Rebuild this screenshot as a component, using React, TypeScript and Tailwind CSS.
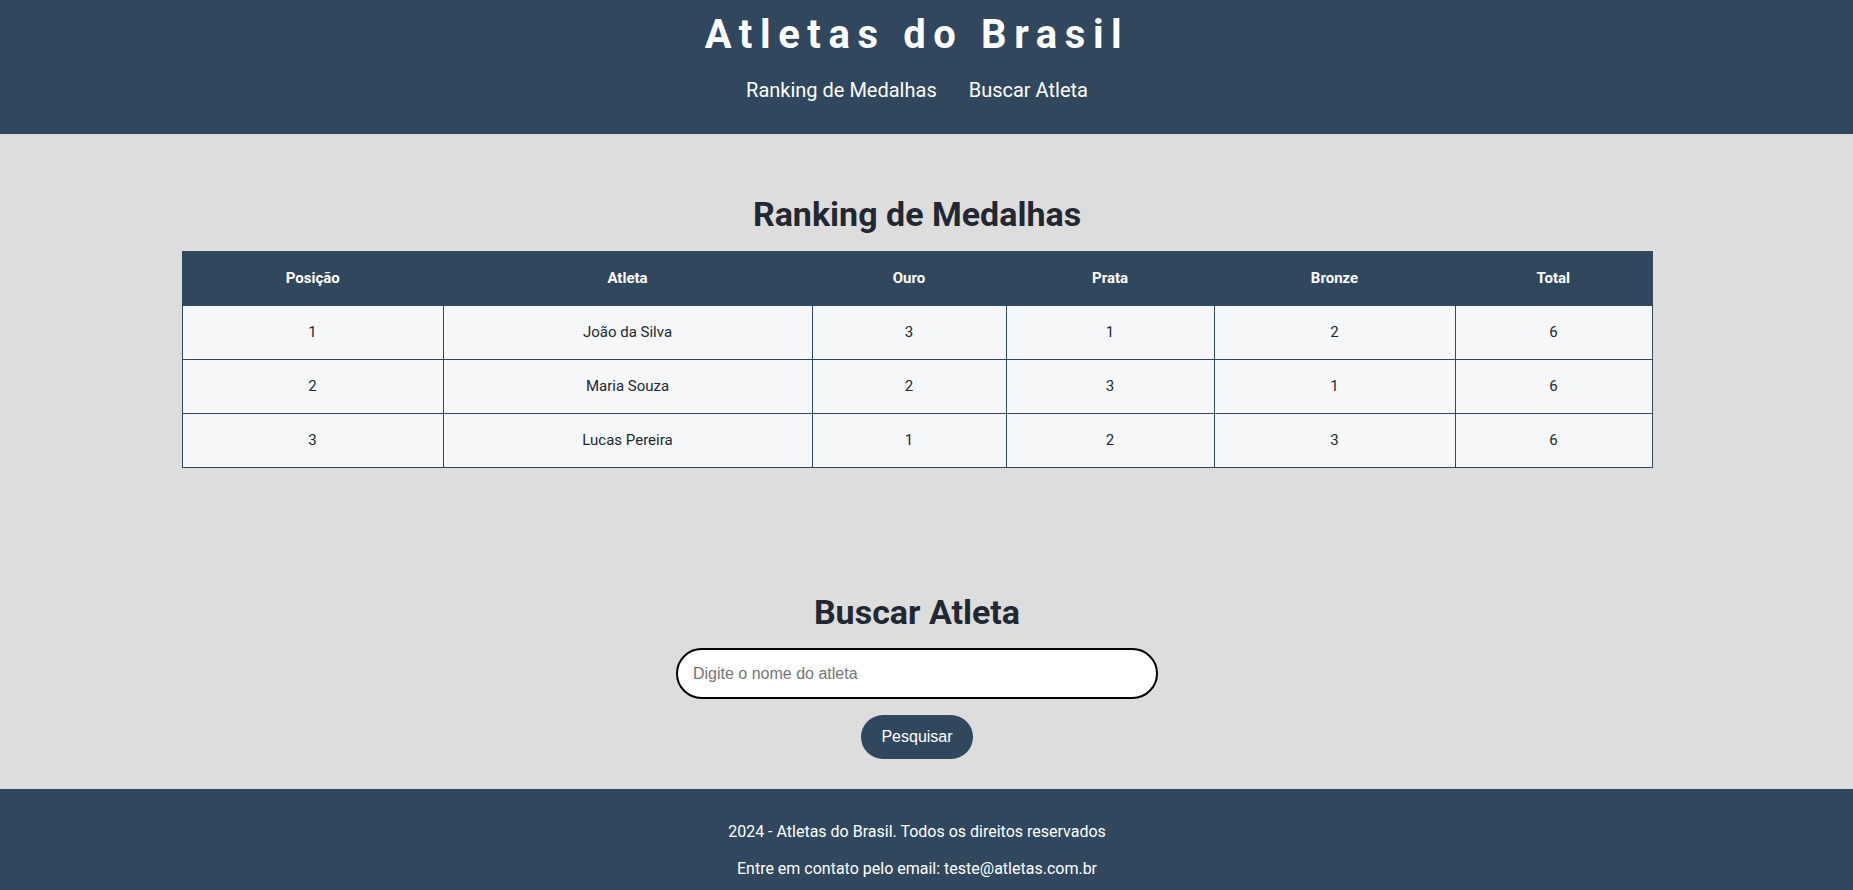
import React from "react";

const rows = [
  { pos: 1, nome: "João da Silva", ouro: 3, prata: 1, bronze: 2, total: 6 },
  { pos: 2, nome: "Maria Souza", ouro: 2, prata: 3, bronze: 1, total: 6 },
  { pos: 3, nome: "Lucas Pereira", ouro: 1, prata: 2, bronze: 3, total: 6 },
];

export default function App() {
  return (
    <div className="min-h-screen bg-[#dddddd] font-['Roboto',sans-serif]">
      <header className="bg-[#30475e] h-[134px] pr-[19px] flex flex-col items-center text-white">
        <h1 className="mt-[12px] text-[40px] leading-[46px] font-bold tracking-[7.6px]">Atletas do Brasil</h1>
        <nav className="mt-[20px] flex gap-[32px] text-[20px] leading-[24px]">
          <a href="#ranking">Ranking de Medalhas</a>
          <a href="#buscar">Buscar Atleta</a>
        </nav>
      </header>

      <main className="h-[655px] pr-[19px] flex flex-col items-center pt-[60px]">
        <h2 id="ranking" className="text-[34px] leading-[40px] font-bold text-[#222831]">Ranking de Medalhas</h2>
        <table className="mt-[17px] w-[1470px] table-fixed border-collapse border border-[#30475e] text-center">
          <colgroup>
            <col className="w-[261px]" />
            <col className="w-[369px]" />
            <col className="w-[194px]" />
            <col className="w-[208px]" />
            <col className="w-[241px]" />
            <col className="w-[197px]" />
          </colgroup>
          <thead>
            <tr className="bg-[#30475e] text-white h-[54px]">
              {["Posição", "Atleta", "Ouro", "Prata", "Bronze", "Total"].map((h) => (
                <th key={h} className="font-bold text-[15px]">{h}</th>
              ))}
            </tr>
          </thead>
          <tbody>
            {rows.map((r) => (
              <tr key={r.pos} className="h-[54px] bg-[#f5f7f9] text-[#222831] text-[15px]">
                <td className="border border-[#30475e]">{r.pos}</td>
                <td className="border border-[#30475e]">{r.nome}</td>
                <td className="border border-[#30475e]">{r.ouro}</td>
                <td className="border border-[#30475e]">{r.prata}</td>
                <td className="border border-[#30475e]">{r.bronze}</td>
                <td className="border border-[#30475e]">{r.total}</td>
              </tr>
            ))}
          </tbody>
        </table>

        <h2 id="buscar" className="mt-[124px] text-[34px] leading-[40px] font-bold text-[#222831]">Buscar Atleta</h2>
        <input
          type="text"
          placeholder="Digite o nome do atleta"
          className="mt-[16px] w-[482px] h-[51px] rounded-full border-2 border-black bg-white pl-[15px] text-[16px] font-['Liberation_Sans',Arial,sans-serif] placeholder:text-[#757575] outline-none"
        />
        <button className="mt-[16px] h-[44px] px-[20px] rounded-full bg-[#30475e] text-white text-[16px] font-['Liberation_Sans',Arial,sans-serif]">
          Pesquisar
        </button>
      </main>

      <footer className="bg-[#30475e] pr-[19px] text-white text-center text-[16px] leading-[21px] pt-[32px] pb-[32px] flex flex-col gap-[16px]">
        <p>2024 - Atletas do Brasil. Todos os direitos reservados</p>
        <p>Entre em contato pelo email: teste@atletas.com.br</p>
      </footer>
    </div>
  );
}
